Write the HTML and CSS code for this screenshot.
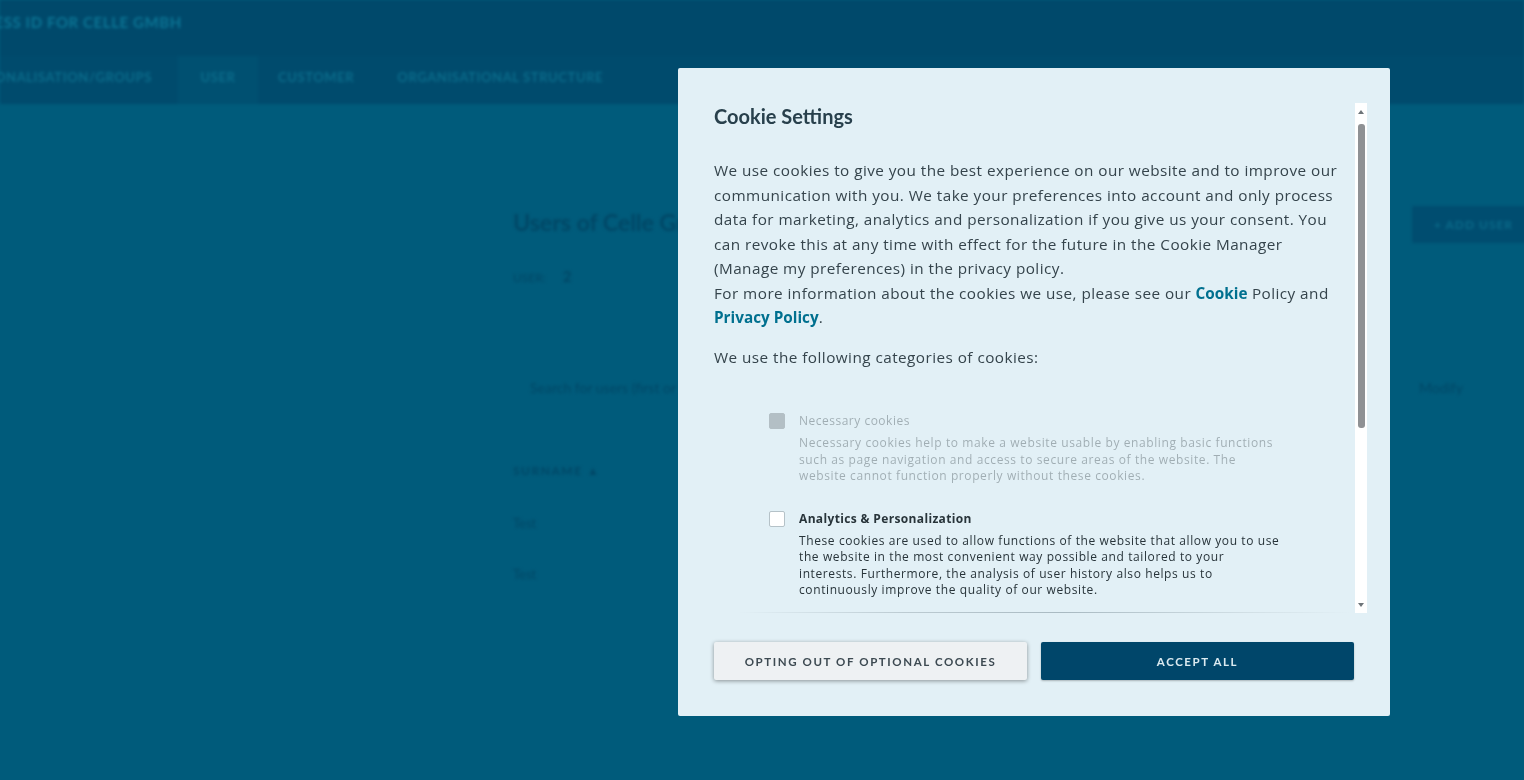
FILE: index.html
```html
<!DOCTYPE html>
<html>
  <head>
    <title>Cookie Settings</title>
    <link rel="stylesheet" href="styles.css">
  </head>
  <body>
    <div class="page">
      <header class="top-bar">
        <div class="brand">ACCESS ID FOR CELLE GMBH</div>
      </header>
      <nav class="nav-bar">
        <a class="nav-first">PERSONALISATION/GROUPS</a>
        <a class="nav-tab">USER</a>
        <a class="nav-item">CUSTOMER</a>
        <a class="nav-item">ORGANISATIONAL STRUCTURE</a>
      </nav>
      <main class="main">
        <div class="title-row">
          <h1 class="page-title">Users of Celle GmbH</h1>
          <button class="add-button">+ ADD USER</button>
        </div>
        <p class="user-count">USER: <b class="user-number">2</b></p>
        <div class="search-row">
          <span>Search for users (first or last name, email)</span>
          <span>Modify</span>
        </div>
        <p class="table-head">SURNAME ▲</p>
        <p class="table-row">Test</p>
        <p class="table-row">Test</p>
      </main>
    </div>

    <div class="overlay">
      <div class="modal">
        <div class="modal-body">
          <div class="modal-scroll">
            <h2 class="modal-title">Cookie Settings</h2>
            <p class="intro">We use cookies to give you the best experience on our website and to improve our communication with you. We take your preferences into account and only process data for marketing, analytics and personalization if you give us your consent. You can revoke this at any time with effect for the future in the Cookie Manager (Manage my preferences) in the privacy policy.<br>For more information about the cookies we use, please see our <a class="link">Cookie</a> Policy and <a class="link">Privacy Policy</a>.</p>
            <p class="intro categories">We use the following categories of cookies:</p>

            <div class="option option-disabled">
              <span class="checkbox checkbox-disabled"></span>
              <div class="option-text">
                <p class="option-title">Necessary cookies</p>
                <p class="option-desc">Necessary cookies help to make a website usable by enabling basic functions such as page navigation and access to secure areas of the website. The website cannot function properly without these cookies.</p>
              </div>
            </div>

            <div class="option">
              <span class="checkbox"></span>
              <div class="option-text">
                <p class="option-title">Analytics &amp; Personalization</p>
                <p class="option-desc">These cookies are used to allow functions of the website that allow you to use the website in the most convenient way possible and tailored to your interests. Furthermore, the analysis of user history also helps us to continuously improve the quality of our website.</p>
              </div>
            </div>
          </div>
          <div class="scrollbar">
            <span class="arrow-up"></span>
            <span class="thumb"></span>
            <span class="arrow-down"></span>
          </div>
        </div>
        <div class="modal-buttons">
          <button class="modal-button button-light">OPTING OUT OF OPTIONAL COOKIES</button>
          <button class="modal-button button-dark">ACCEPT ALL</button>
        </div>
      </div>
    </div>
  </body>
</html>
```

FILE: styles.css
```css
body {
  margin: 0;
  height: 780px;
  overflow: hidden;
  background-color: #005b7b;
  font-family: "Lato", "Open Sans", sans-serif;
}
p, h1, h2 {
  margin: 0;
}
.page {
  filter: blur(1.4px);
}
.top-bar {
  height: 56px;
  background-color: #00496b;
}
.brand {
  width: 182px;
  height: 31px;
  display: flex;
  justify-content: flex-end;
  align-items: flex-end;
  white-space: nowrap;
  color: #0b7595;
  font-size: 15px;
  font-weight: bold;
  letter-spacing: 0.6px;
}
.nav-bar {
  height: 48px;
  background-color: #004b6d;
  display: flex;
  align-items: stretch;
  color: #0a6c8b;
  font-size: 13px;
  font-weight: bold;
  letter-spacing: 0.6px;
}
.nav-bar a {
  display: flex;
  align-items: center;
  white-space: nowrap;
  padding-bottom: 6px;
  box-sizing: border-box;
}
.nav-first {
  width: 152px;
  justify-content: flex-end;
  margin-right: 26px;
}
.nav-tab {
  width: 80px;
  justify-content: center;
  background-color: #005071;
  margin-right: 20px;
}
.nav-item {
  margin-right: 43px;
}
.main {
  margin-left: 513px;
  padding-top: 102px;
  color: #004766;
  width: 1040px;
}
.title-row {
  display: flex;
  justify-content: space-between;
  align-items: center;
  height: 37px;
}
.page-title {
  font-size: 23.5px;
  font-weight: bold;
  letter-spacing: -0.2px;
  margin-bottom: 5px;
}
.add-button {
  width: 141px;
  height: 37px;
  border: none;
  background-color: #004d70;
  color: #0a6b8a;
  font-family: inherit;
  font-size: 12px;
  font-weight: bold;
  letter-spacing: 1px;
  text-align: left;
  padding-left: 22px;
}
.user-count {
  margin-top: 24px;
  font-size: 12px;
}
.user-number {
  font-size: 15px;
  margin-left: 14px;
}
.search-row {
  margin-top: 94px;
  padding: 0 90px 0 17px;
  display: flex;
  justify-content: space-between;
  font-size: 14px;
}
.table-head {
  margin-top: 67px;
  margin-bottom: 37px;
  font-size: 12px;
  font-weight: bold;
  letter-spacing: 1.5px;
}
.table-row {
  margin-bottom: 35px;
  font-size: 13px;
}
.overlay {
  position: fixed;
  top: 68px;
  left: 678px;
}
.modal {
  width: 712px;
  height: 648px;
  box-sizing: border-box;
  padding: 35px 36px 36px;
  background-color: #e2f0f6;
  border-radius: 2px;
  display: flex;
  flex-direction: column;
  filter: blur(0.7px);
}
.modal-body {
  height: 510px;
  display: flex;
  gap: 5px;
  margin-right: -13px;
}
.modal-scroll {
  flex: 1;
  overflow: hidden;
  font-family: "Open Sans", sans-serif;
  border-bottom: 1px solid;
  border-image: linear-gradient(to right, transparent 4%, #bccbd2 30%, #a9bac2 55%, #d3e1e7 85%, transparent) 1;
}
.modal-title {
  font-family: "Lato", sans-serif;
  font-size: 20px;
  line-height: 26px;
  font-weight: bold;
  color: #28404c;
}
.intro {
  margin-top: 29px;
  max-width: 626px;
  font-size: 15.3px;
  letter-spacing: 0.45px;
  line-height: 24.5px;
  color: #35444c;
}
.categories {
  margin-top: 15px;
}
.link {
  color: #00708f;
  font-weight: bold;
  letter-spacing: 0;
}
.option {
  display: flex;
  gap: 14px;
  margin-top: 44px;
  margin-left: 55px;
  color: #28343a;
}
.option + .option {
  margin-top: 26px;
}
.option-disabled {
  opacity: 0.35;
}
.checkbox {
  flex: none;
  width: 16px;
  height: 16px;
  box-sizing: border-box;
  background-color: white;
  border: 1px solid #b5c2c8;
  border-radius: 2px;
}
.checkbox-disabled {
  background-color: #5d666b;
  border-color: #5d666b;
}
.option-text {
  width: 485px;
}
.option-title {
  font-size: 12px;
  font-weight: bold;
  letter-spacing: 0.35px;
  line-height: 16px;
}
.option-disabled .option-title {
  font-weight: normal;
  letter-spacing: 0.5px;
}
.option-desc {
  margin-top: 6px;
  font-size: 12px;
  letter-spacing: 0.6px;
  line-height: 16.5px;
}
.scrollbar {
  flex: none;
  width: 12px;
  background-color: white;
  display: flex;
  flex-direction: column;
  align-items: center;
}
.thumb {
  width: 7px;
  height: 304px;
  margin-top: 10px;
  background-color: #8f9194;
  border-radius: 3px;
}
.arrow-up, .arrow-down {
  width: 0;
  height: 0;
  border-left: 3px solid transparent;
  border-right: 3px solid transparent;
}
.arrow-up {
  margin-top: 7px;
  border-bottom: 4px solid #6d7478;
}
.arrow-down {
  margin-top: auto;
  margin-bottom: 6px;
  border-top: 4px solid #6d7478;
}
.modal-buttons {
  display: flex;
  gap: 14px;
  margin-top: 29px;
}
.modal-button {
  width: 313px;
  height: 38px;
  border: none;
  border-radius: 2px;
  font-family: inherit;
  font-size: 11.5px;
  font-weight: bold;
  letter-spacing: 1.6px;
}
.button-light {
  background-color: #eef1f3;
  color: #3d4a52;
  box-shadow: 0 1px 4px rgba(0, 0, 0, 0.4);
}
.button-dark {
  background-color: #00466a;
  color: #dbeaf0;
  box-shadow: 0 1px 2px rgba(0, 0, 0, 0.25);
}
```
